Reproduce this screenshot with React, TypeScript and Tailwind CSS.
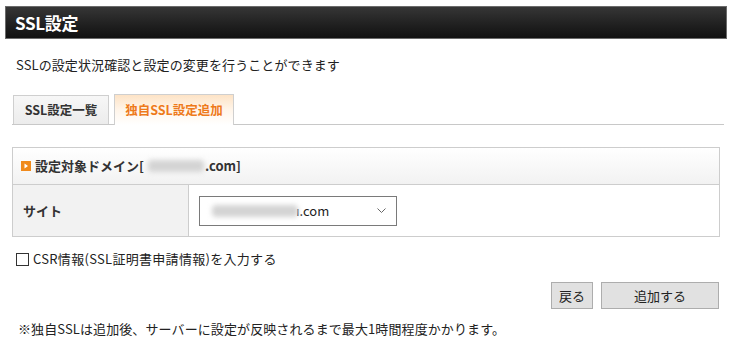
import React from 'react'

const jp = { fontFamily: '"Noto Sans CJK JP", sans-serif' }

function Blur({ w }: { w: number }) {
  return (
    <span
      className="inline-block h-[12px] rounded-sm bg-[#d4d4d4] blur-[2.5px] align-middle"
      style={{ width: w }}
    />
  )
}

export default function App() {
  return (
    <div className="w-[732px] h-[342px] bg-white text-[#333] text-[13px] pt-[6px] px-[5px]" style={jp}>
      <div className="h-[33px] border border-[#6b6b6b] bg-gradient-to-b from-[#363636] to-[#111] flex items-center pl-[9px]">
        <h1 className="text-white font-bold text-[17px] tracking-[-0.3px]">SSL設定</h1>
      </div>

      <div className="pl-[7px] pr-[3px]">
        <p className="mt-[17px] pl-[4px] leading-[18px] text-[#222] tracking-[0.1px]">
          SSLの設定状況確認と設定の変更を行うことができます
        </p>

        <div className="mt-[20px] flex items-end border-b border-[#c8c8c8] h-[31px]">
          <div className="ml-[1px] h-[29px] w-[96px] border border-b-0 border-[#cfcfcf] bg-gradient-to-b from-[#f7f7f7] to-[#ececec] flex items-center justify-center font-bold text-[12.5px] text-[#333]">
            SSL設定一覧
          </div>
          <div className="ml-[5px] -mb-px h-[31px] w-[120px] border border-b-0 border-[#cfcfcf] bg-gradient-to-b from-[#fde3c6] via-[#fff5ea] to-white flex items-center justify-center font-bold text-[12.5px] text-[#ee7a1b]">
            独自SSL設定追加
          </div>
        </div>

        <div className="mt-[22px] mr-[4px] border border-[#cdcdcd]">
          <div className="h-[37px] bg-gradient-to-b from-white to-[#f2f2f2] border-b border-[#cdcdcd] flex items-center pl-[8px] gap-[4px] font-bold">
            <svg width="10" height="10" viewBox="0 0 10 10">
              <rect width="10" height="10" fill="#f08a1c" />
              <path d="M3.5 2.5 L7 5 L3.5 7.5 Z" fill="#fff" />
            </svg>
            <span className="text-[13px] text-[#333]">設定対象ドメイン[</span>
            <Blur w={56} />
            <span className="text-[13px] text-[#333] -ml-[3px]">.com]</span>
          </div>
          <div className="flex h-[51px]">
            <div className="w-[176px] bg-[#f2f2f2] border-r border-[#cdcdcd] flex items-center pl-[10px] font-bold text-[#333]">
              サイト
            </div>
            <div className="flex items-center pl-[10px]">
              <div className="w-[198px] h-[30px] border border-[#7a7a7a] bg-white flex items-center pl-[12px] pr-[10px]">
                <Blur w={86} />
                <span className="text-[13px] text-[#222] -ml-[2px]">ı.com</span>
                <svg className="ml-auto" width="9" height="5" viewBox="0 0 9 5">
                  <path d="M0.5 0.5 L4.5 4.5 L8.5 0.5" fill="none" stroke="#666" strokeWidth="1" />
                </svg>
              </div>
            </div>
          </div>
        </div>

        <label className="mt-[14px] flex items-center gap-[4px] pl-[4px] text-[#222]">
          <span className="w-[13px] h-[13px] border border-[#333] bg-white" />
          <span className="leading-[16px] tracking-[0.3px]">CSR情報(SSL証明書申請情報)を入力する</span>
        </label>

        <div className="mt-[15px] mr-[5px] flex justify-end gap-[8px]">
          <button className="h-[27px] w-[42px] bg-[#e1e1e1] border border-[#adadad] text-[13px] text-[#222]">
            戻る
          </button>
          <button className="h-[27px] w-[118px] bg-[#e1e1e1] border border-[#adadad] text-[13px] text-[#222]">
            追加する
          </button>
        </div>

        <p className="mt-[12px] pl-[6px] text-[13px] text-[#222] leading-[16px] tracking-[0.1px]">
          ※独自SSLは追加後、サーバーに設定が反映されるまで最大1時間程度かかります。
        </p>
      </div>
    </div>
  )
}
